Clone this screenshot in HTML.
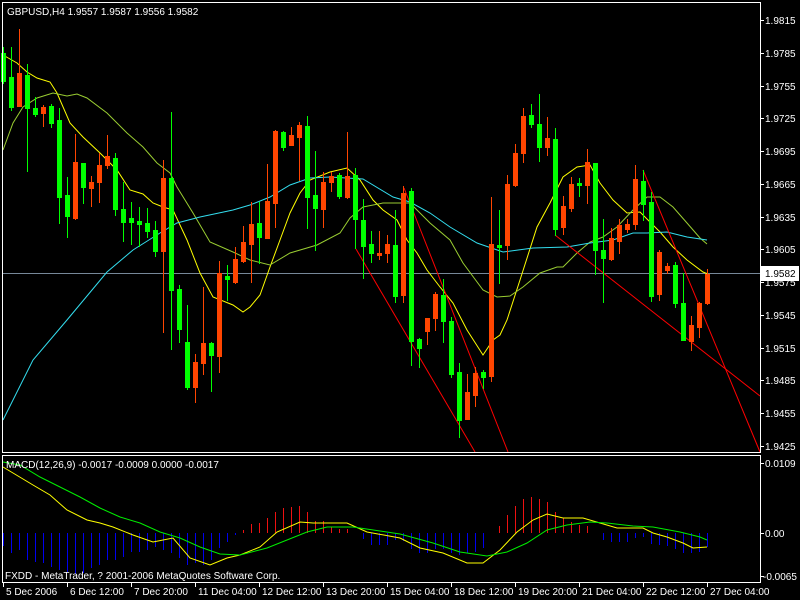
<!DOCTYPE html>
<html><head><meta charset="utf-8">
<style>
html,body{margin:0;padding:0;background:#000;width:800px;height:600px;overflow:hidden}
svg{display:block}
text{font-family:"Liberation Sans","DejaVu Sans",sans-serif;font-size:10px;fill:#fff}
</style></head>
<body>
<svg id="s" width="800" height="600" viewBox="0 0 800 600" xmlns="http://www.w3.org/2000/svg" shape-rendering="crispEdges">
<rect width="800" height="600" fill="#000"/>
<g id="g"></g>
<!-- frames -->
<g stroke="#fff" stroke-width="1" fill="none">
<path d="M2.5 2.5H760.5V452.5H2.5Z"/>
<path d="M2.5 455.5H760.5V582.5H2.5Z"/>
</g>
<text x="7" y="15">GBPUSD,H4  1.9557 1.9587 1.9556 1.9582</text>
<text x="6" y="468">MACD(12,26,9) -0.0017 -0.0009 0.0000 -0.0017</text>
<text x="5" y="579">FXDD - MetaTrader, ? 2001-2006 MetaQuotes Software Corp.</text>
<g id="ax"></g>
<rect x="761" y="266" width="38" height="15" fill="#fff"/>
<text x="765" y="277" style="fill:#000">1.9582</text>
<g id="tl"></g>
</svg>
<script>
var NS="http://www.w3.org/2000/svg",g=document.getElementById('g');
function el(n,a,p){var e=document.createElementNS(NS,n);for(var k in a)e.setAttribute(k,a[k]);(p||g).appendChild(e);return e;}
// candles: [bodyTop, bodyBot, wickTop, wickBot, color(g/r)]
var C=[[53,81,47,83,'g'],[77,107,47,110,'g'],[73,106,29,106,'r'],[75,108,64,171,'g'],[108,114,97,116,'g'],[107,113,105,126,'r'],[106,123,104,127,'g'],
[120,197,108,223,'g'],[195,216,177,237,'g'],[162,218,134,219,'r'],[163,187,163,203,'g'],[182,188,176,206,'r'],[165,182,153,202,'r'],[156,165,135,168,'r'],
[158,209,153,215,'g'],[209,222,182,241,'g'],[218,222,202,244,'g'],[221,224,207,246,'g'],[223,231,208,237,'g'],[230,251,221,256,'g'],[178,251,160,332,'r'],
[178,290,112,349,'g'],[289,329,285,342,'g'],[342,387,305,389,'g'],[362,387,354,402,'r'],[343,363,287,374,'r'],[343,355,342,391,'g'],[273,356,261,372,'r'],
[276,279,265,300,'g'],[259,282,247,283,'r'],[242,261,226,262,'r'],[224,244,202,282,'r'],[223,237,202,263,'g'],[201,238,164,238,'r'],[131,203,130,227,'r'],
[132,147,131,150,'g'],[135,145,127,145,'r'],[125,137,122,180,'r'],[126,197,116,228,'g'],[195,208,151,250,'g'],[182,209,172,227,'r'],[176,182,172,191,'r'],
[175,196,173,198,'g'],[176,197,132,198,'r'],[175,219,168,248,'g'],[220,246,199,278,'g'],[244,253,231,262,'g'],[253,255,231,259,'r'],[244,253,235,262,'r'],
[245,296,210,302,'g'],[193,295,186,302,'r'],[191,341,188,365,'g'],[339,348,338,367,'g'],[318,331,318,344,'r'],[294,318,292,330,'r'],[295,321,279,342,'g'],
[321,374,317,377,'g'],[372,420,363,437,'g'],[392,419,374,419,'r'],[373,395,367,406,'r'],[372,377,370,388,'g'],[244,376,197,381,'r'],[245,247,210,283,'g'],
[184,245,175,259,'r'],[153,185,144,186,'r'],[116,153,108,162,'r'],[115,124,104,127,'g'],[124,147,94,161,'g'],[138,147,117,155,'r'],[139,229,128,235,'g'],
[206,227,196,234,'r'],[184,208,177,211,'r'],[183,185,178,196,'g'],[162,185,149,203,'r'],[163,250,163,274,'g'],[250,258,219,302,'g'],[238,259,228,260,'r'],
[225,241,219,253,'r'],[224,229,219,232,'r'],[179,224,165,229,'r'],[181,204,170,220,'g'],[202,296,192,301,'g'],[252,294,250,300,'r'],[266,270,263,273,'r'],
[265,303,262,307,'g'],[303,340,273,340,'g'],[325,341,316,350,'r'],[303,327,302,337,'r'],[274,303,269,304,'r']];
function pl(pts,col){var d=pts.map(function(p,i){return (i?'L':'M')+p[0]+' '+p[1]}).join('');el('path',{d:d,stroke:col,fill:'none','stroke-width':1,'shape-rendering':'auto'});}
// gray price line
el('rect',{x:3,y:273,width:757,height:1,fill:'#778899'});
// MAs
pl([[3,55],[17,63],[27,72],[37,78],[50,82],[57,93],[70,123],[83,137],[100,153],[117,170],[130,190],[143,194],[153,203],[163,207],[173,210],[187,240],[200,273],[213,297],[233,305],[243,312],[250,307],[260,295],[270,267],[280,240],[290,213],[300,193],[310,180],[330,172],[347,168],[360,180],[373,200],[383,210],[397,220],[407,240],[417,253],[427,270],[440,287],[453,303],[467,330],[483,355],[493,340],[500,335],[507,320],[520,280],[537,227],[550,203],[563,177],[577,167],[590,165],[600,183],[613,200],[627,213],[640,212],[660,232],[673,247],[687,260],[703,272],[708,274]],'#ffff00');
pl([[3,150],[13,123],[23,107],[37,98],[53,93],[67,96],[77,94],[87,98],[107,113],[127,133],[143,147],[157,163],[170,173],[177,187],[193,213],[210,242],[233,252],[250,260],[270,265],[290,253],[317,245],[340,233],[350,218],[363,207],[383,203],[397,203],[410,203],[430,223],[450,240],[463,263],[483,290],[497,297],[510,296],[523,287],[540,273],[557,267],[563,267],[577,253],[590,242],[603,237],[617,227],[633,210],[647,197],[660,197],[673,207],[687,223],[700,238],[707,244]],'#9acd32');
pl([[3,420],[8,410],[33,360],[67,320],[107,272],[133,250],[160,233],[177,223],[200,217],[233,210],[250,205],[270,197],[290,185],[310,178],[330,177],[363,179],[393,197],[410,202],[430,213],[450,227],[477,243],[503,252],[533,248],[567,247],[590,243],[613,240],[633,233],[647,233],[667,232],[687,237],[707,240]],'#33ddee');
// trendlines
pl([[356,249],[475,452]],'#ff0000');
pl([[404,188],[508,452]],'#ff0000');
pl([[555,235],[760,396]],'#ff0000');
pl([[643,170],[760,452]],'#ff0000');
C.forEach(function(c,k){var x=3+8*k,col=c[4]=='g'?'#00ff00':'#ff4500';
 el('rect',{x:x,y:c[2],width:1,height:c[3]-c[2]+1,fill:col});
 el('rect',{x:x-2,y:c[0],width:5,height:Math.max(1,c[1]-c[0]+1),fill:col});});
// histogram: bottom/top y per bar, zero at 533
var H=[546,553,550,560,562,563,567,570,572,574,573,568,565,560,560,557,552,552,550,547,550,553,558,565,563,565,560,548,542,535,530,524,523,518,512,508,507,506,512,521,521,527,529,529,533,539,545,545,545,540,541,549,553,553,549,549,553,555,553,552,548,533,526,515,506,499,497,499,502,512,518,522,525,526,533,540,542,542,542,538,537,544,545,546,549,553,553,552,547];
H.forEach(function(v,k){var x=3+8*k;if(v==533)return;
 if(v>533)el('rect',{x:x,y:533,width:1,height:v-533,fill:'#0000ee'});
 else el('rect',{x:x,y:v,width:1,height:533-v,fill:'#ee1111'});});
pl([[3,467],[13,473],[33,485],[50,495],[67,510],[87,520],[100,523],[113,527],[133,535],[153,542],[173,538],[190,558],[210,565],[227,558],[240,555],[260,547],[277,532],[300,522],[313,523],[347,523],[367,532],[400,538],[420,548],[443,553],[467,563],[483,563],[500,550],[517,532],[533,520],[547,514],[563,518],[583,518],[600,523],[617,528],[643,528],[653,533],[667,537],[683,543],[693,548],[707,547]],'#ffff00');
pl([[3,462],[20,465],[40,477],[60,487],[80,497],[100,508],[120,517],[140,523],[160,532],[180,538],[200,547],[220,554],[240,555],[267,548],[287,540],[307,532],[327,527],[353,527],[380,531],[400,534],[433,543],[460,552],[487,556],[507,552],[527,543],[547,530],[567,525],[590,522],[607,523],[633,526],[653,527],[680,532],[700,537],[707,540]],'#00ee00');
// axis labels
var ax=document.getElementById('ax');
var P=['1.9815','1.9785','1.9755','1.9725','1.9695','1.9665','1.9635','1.9605','1.9575','1.9545','1.9515','1.9485','1.9455','1.9425'];
P.forEach(function(p,i){var y=Math.round(20+i*32.77);
 el('rect',{x:761,y:y,width:3,height:1,fill:'#fff'},ax);
 el('text',{x:765,y:y+4},ax).textContent=p;});
[[463,'0.0109'],[533,'0.00'],[576,'-0.0065']].forEach(function(a){
 el('rect',{x:761,y:a[0],width:3,height:1,fill:'#fff'},ax);
 el('text',{x:(a[1][0]=='-'?763:765),y:a[0]+4},ax).textContent=a[1];});
var T=['5 Dec 2006','6 Dec 12:00','7 Dec 20:00','11 Dec 04:00','12 Dec 12:00','13 Dec 20:00','15 Dec 04:00','18 Dec 12:00','19 Dec 20:00','21 Dec 04:00','22 Dec 12:00','27 Dec 04:00'];
T.forEach(function(t,i){var x=3+64*i;
 el('rect',{x:x,y:583,width:1,height:4,fill:'#fff'},ax);
 el('text',{x:x+3,y:595},ax).textContent=t;});
</script>
</body></html>
